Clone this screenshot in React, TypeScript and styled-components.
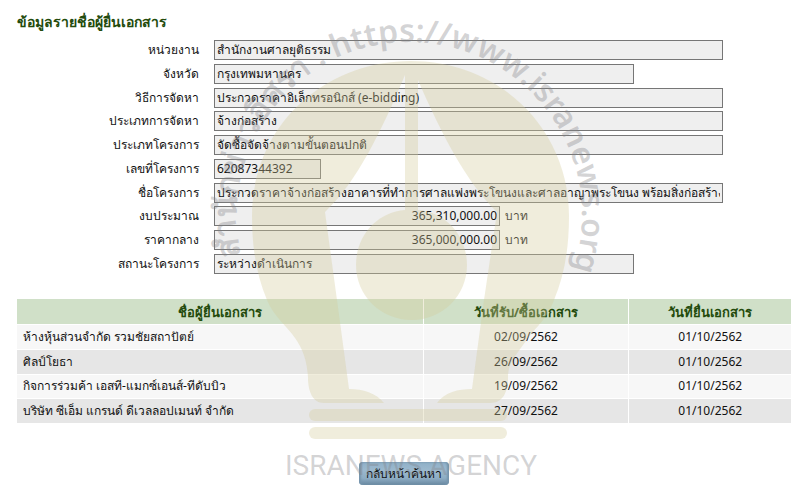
import React from "react";
import styled, { createGlobalStyle } from "styled-components";

const GlobalStyle = createGlobalStyle`
  * { box-sizing: border-box; }
  body {
    margin: 0;
    background: #fff;
    color: #111;
    font: 12px/20px "Noto Sans", sans-serif;
  }
`;

const Page = styled.main`
  position: relative;
  padding: 12px 9px 12px 17px;
`;

const Title = styled.h1`
  margin: 0 0 8px;
  color: #234b0c;
  font-size: 14px;
  line-height: 20px;
  font-weight: 700;
`;

const Form = styled.form`
  display: grid;
  align-content: space-between;
  min-height: 234px;
`;

const Row = styled.div`
  display: grid;
  grid-template-columns: 182px minmax(0, 1fr);
  column-gap: 15px;
  align-items: center;
  height: 20px;
  padding-right: 68px;
`;

const Label = styled.label`
  text-align: right;
  white-space: nowrap;
`;

const Control = styled.div`
  display: flex;
  align-items: center;
  gap: 5px;
`;

const Field = styled.input<{ $width: string; $numeric?: boolean }>`
  width: ${(p) => p.$width};
  height: 20px;
  padding: 0 2px;
  border: 1px solid #767676;
  border-radius: 0;
  background: #efefef;
  color: inherit;
  font: inherit;
  text-align: ${(p) => (p.$numeric ? "right" : "left")};
`;

const Unit = styled.span`
  white-space: nowrap;
`;

const Table = styled.table`
  width: 100%;
  height: 125px;
  margin-top: 25px;
  border-collapse: separate;
  border-spacing: 0;
  table-layout: fixed;
`;

const Column = styled.col<{ $width: string }>`
  width: ${(p) => p.$width};
`;

const HeadCell = styled.th`
  height: 26px;
  padding: 0 6px;
  border-bottom: 1px solid #fff;
  background: #d0e0c8;
  color: #234b0c;
  font-size: 13px;
  & + & { border-left: 1px solid #fff; }
`;

const BodyRow = styled.tr`
  background: #f7f7f7;
  &:nth-child(even) { background: #e6e6e6; }
`;

const Cell = styled.td<{ $center?: boolean }>`
  height: 24px;
  padding: 0 6px;
  border-bottom: 1px solid #fff;
  text-align: ${(p) => (p.$center ? "center" : "left")};
  & + & { border-left: 1px solid #fff; }
`;

const Actions = styled.div`
  display: flex;
  justify-content: center;
  margin-top: 38px;
`;

const BackButton = styled.button`
  height: 23px;
  padding: 0 7px;
  border: 0;
  border-radius: 4px;
  background: linear-gradient(#8fb0c8, #9cb9ce 35%, #8eadc4 70%, #67879f);
  box-shadow: inset 2px 0 2px #7695ad, inset -2px 0 2px #7695ad;
  color: #111;
  font: inherit;
  line-height: 20px;
`;

const Watermark = styled.svg`
  position: absolute;
  top: 0;
  left: 50%;
  width: 800px;
  height: 497px;
  margin-left: -400px;
  pointer-events: none;
`;

type FieldData = { id: string; label: string; value: string; width: string; unit?: string };

const fields: FieldData[] = [
  { id: "agency", label: "หน่วยงาน", value: "สำนักงานศาลยุติธรรม", width: "100%" },
  { id: "province", label: "จังหวัด", value: "กรุงเทพมหานคร", width: "420px" },
  { id: "method", label: "วิธีการจัดหา", value: "ประกวดราคาอิเล็กทรอนิกส์ (e-bidding)", width: "100%" },
  { id: "supply", label: "ประเภทการจัดหา", value: "จ้างก่อสร้าง", width: "100%" },
  { id: "type", label: "ประเภทโครงการ", value: "จัดซื้อจัดจ้างตามขั้นตอนปกติ", width: "100%" },
  { id: "number", label: "เลขที่โครงการ", value: "62087344392", width: "107px" },
  { id: "name", label: "ชื่อโครงการ", value: "ประกวดราคาจ้างก่อสร้างอาคารที่ทำการศาลแพ่งพระโขนงและศาลอาญาพระโขนง พร้อมสิ่งก่อสร้าง", width: "100%" },
  { id: "budget", label: "งบประมาณ", value: "365,310,000.00", width: "286px", unit: "บาท" },
  { id: "median", label: "ราคากลาง", value: "365,000,000.00", width: "286px", unit: "บาท" },
  { id: "status", label: "สถานะโครงการ", value: "ระหว่างดำเนินการ", width: "420px" },
];

const bidders = [
  ["ห้างหุ้นส่วนจำกัด รวมชัยสถาปัตย์", "02/09/2562", "01/10/2562"],
  ["ศิลป์โยธา", "26/09/2562", "01/10/2562"],
  ["กิจการร่วมค้า เอสที-แมกซ์เอนส์-ทีดับบิว", "19/09/2562", "01/10/2562"],
  ["บริษัท ซีเอ็ม แกรนด์ ดีเวลลอปเมนท์ จำกัด", "27/09/2562", "01/10/2562"],
];

function AgencyMark() {
  return (
    <Watermark viewBox="0 0 800 497" aria-hidden="true">
      <defs>
        <path id="ring" d="M 241 256 A 173 173 0 1 1 563 294" />
      </defs>
      <g fill="rgb(212,202,156)" fillOpacity="0.35">
        <path
          fillRule="evenodd"
          d="M 252 216 C 252 128 322 61 411 61 C 499 61 569 128 569 216 C 569 250 564 276 554 300 C 546 322 533 329 526 341 C 515 356 508 364 508 377 C 508 392 503 403 490 403 L 437 403 C 445 392 458 389 472 389 L 484 300 L 497 212 C 466 182 441 133 418 80 L 418 210 C 446 212 467 236 467 265 C 467 296 442 320 412 320 C 381 320 356 296 356 265 C 356 236 377 212 405 210 L 405 75 C 382 130 357 182 325 212 L 337 300 L 349 389 C 363 389 376 393 384 403 L 324 403 C 313 403 308 392 308 377 C 307 361 303 349 295 338 C 286 325 274 317 267 300 C 257 276 252 250 252 216 Z"
        />
        <rect x="309" y="409" width="198" height="12" rx="6" />
        <rect x="309" y="427" width="198" height="12" rx="6" />
      </g>
      <g fill="rgb(130,130,135)" fillOpacity="0.35">
        <text fontFamily="Noto Sans, sans-serif" fontSize="32" fontWeight="600">
          <textPath href="#ring">สำนักข่าวอิศรา . https://www.isranews.org</textPath>
        </text>
        <text x="411" y="475" textAnchor="middle" fontFamily="Roboto, sans-serif" fontSize="28">
          ISRANEWS AGENCY
        </text>
      </g>
    </Watermark>
  );
}

export default function App() {
  return (
    <Page>
      <GlobalStyle />
      <Title>ข้อมูลรายชื่อผู้ยื่นเอกสาร</Title>
      <Form>
        {fields.map((f) => (
          <Row key={f.id}>
            <Label htmlFor={f.id}>{f.label}</Label>
            <Control>
              <Field id={f.id} $width={f.width} $numeric={Boolean(f.unit)} defaultValue={f.value} readOnly />
              {f.unit && <Unit>{f.unit}</Unit>}
            </Control>
          </Row>
        ))}
      </Form>
      <Table>
        <colgroup>
          <Column $width="52.4%" />
          <Column $width="26.6%" />
          <Column $width="21%" />
        </colgroup>
        <thead>
          <tr>
            <HeadCell scope="col">ชื่อผู้ยื่นเอกสาร</HeadCell>
            <HeadCell scope="col">วันที่รับ/ซื้อเอกสาร</HeadCell>
            <HeadCell scope="col">วันที่ยื่นเอกสาร</HeadCell>
          </tr>
        </thead>
        <tbody>
          {bidders.map(([name, received, submitted]) => (
            <BodyRow key={name}>
              <Cell>{name}</Cell>
              <Cell $center>{received}</Cell>
              <Cell $center>{submitted}</Cell>
            </BodyRow>
          ))}
        </tbody>
      </Table>
      <Actions>
        <BackButton type="button">กลับหน้าค้นหา</BackButton>
      </Actions>
      <AgencyMark />
    </Page>
  );
}
